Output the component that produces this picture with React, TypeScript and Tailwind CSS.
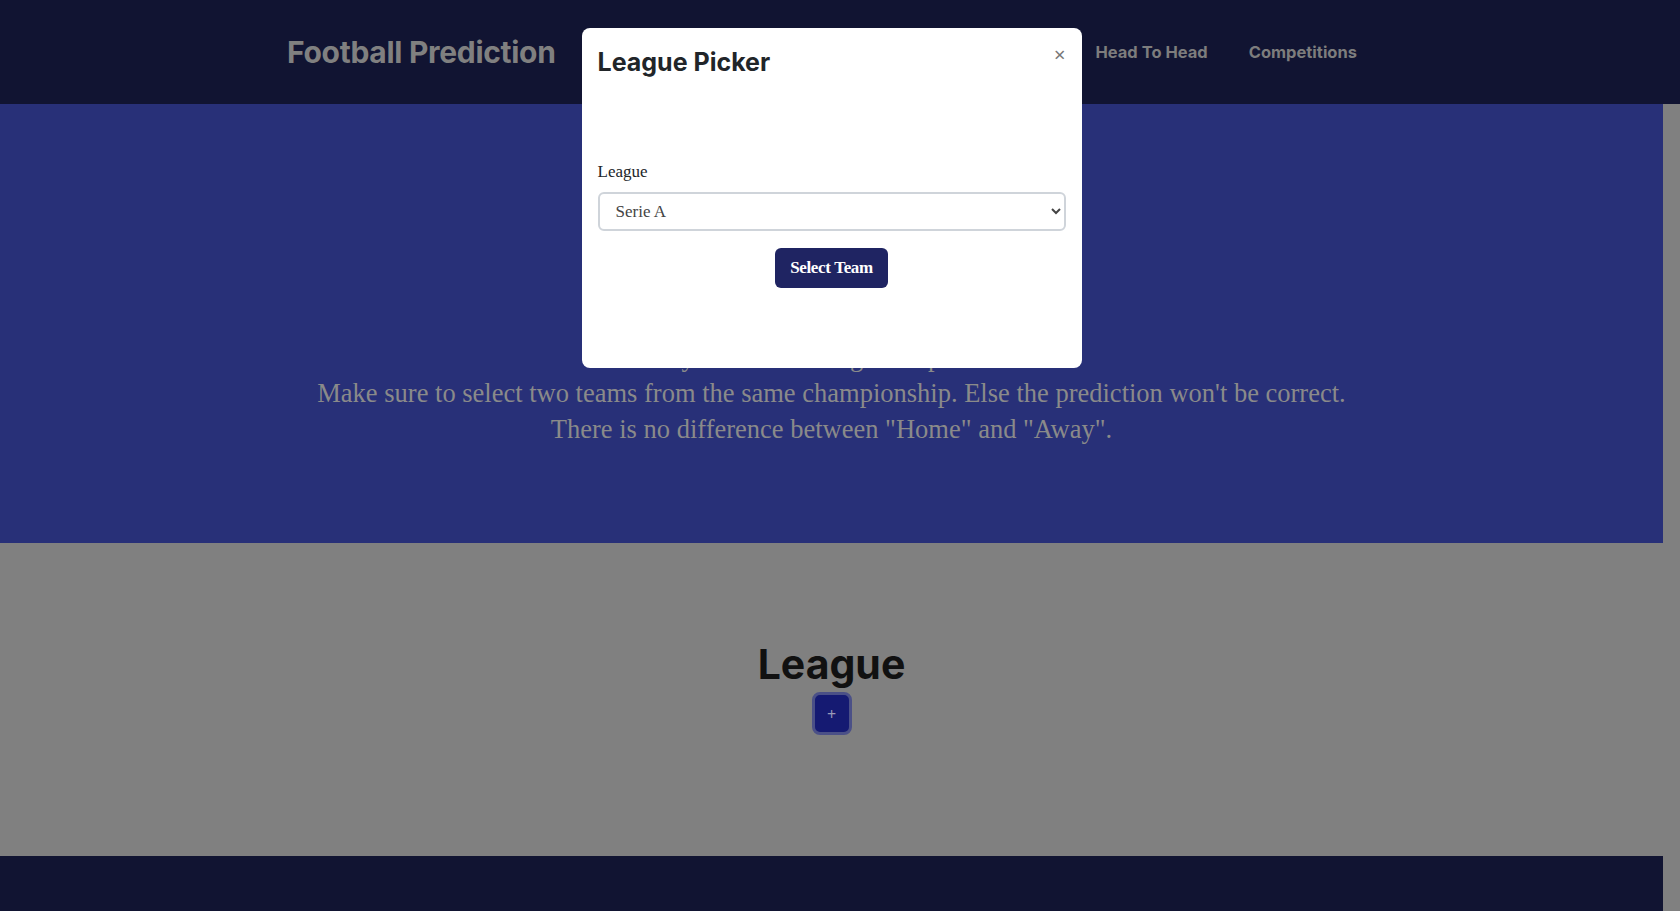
import { useState } from "react";

const display = "font-['Inter','Noto_Sans',sans-serif]";
const serif = "font-['Liberation_Serif','DejaVu_Serif',serif]";

function Header() {
    return <header className="h-[104px] w-full bg-[#111432]">
        <div className="flex h-full items-center justify-between pl-[287px] pr-[323px]">
            <span className={`${display} text-[30px] font-bold tracking-[-0.01em] text-[#808080]`}>Football Prediction</span>
            <nav className={`${display} flex items-center gap-[41px] text-[16.5px] font-bold text-[#7d7d7d]`}>
                <a>Head To Head</a>
                <a>Competitions</a>
            </nav>
        </div>
    </header>;
}

function LeagueModal() {
    const [league, setLeague] = useState("Serie A");
    return <div className="fixed inset-0 flex justify-center pr-[17px] pt-[28px]">
        <div className="relative h-[340px] w-[500px] rounded-[8px] bg-white">
            <div className="flex items-start justify-between p-4">
                <h2 className={`${display} text-[25px] font-bold leading-9 text-[#212529]`}>League Picker</h2>
                <button className="mt-[1px] text-[20px] leading-none text-[#777]">×</button>
            </div>
            <div className={`${serif} px-4 pt-[64px]`}>
                <label className="mb-2 block text-[17px] leading-6 text-[#212529]">League</label>
                <select value={league} onChange={(e) => setLeague(e.target.value)}
                    className="h-[39px] w-full rounded-[6px] border-2 border-[#cfd4da] bg-white pl-[12px] text-[17px] text-[#444]">
                    <option>Serie A</option>
                    <option>Premier League</option>
                    <option>La Liga</option>
                    <option>Bundesliga</option>
                    <option>Ligue 1</option>
                </select>
                <div className="mt-[17px] flex justify-center">
                    <button className="h-[40px] w-[113px] rounded-[6px] bg-[#1f2462] text-[17px] font-bold tracking-[-0.02em] text-white">Select Team</button>
                </div>
            </div>
        </div>
    </div>;
}

export default function App() {
    return <div className="relative min-h-[911px] bg-[#808080]">
        <Header />
        <div className="pr-[17px]">
            {/* title sits under the modal, only the tagline's descenders peek out */}
            <section className={`${serif} flex h-[439px] flex-col items-center bg-[#283078] pt-[235px] text-center text-[26.5px] leading-9 text-[#8a8a8a]`}>
                <p>Pick your teams and get the prediction</p>
                <p>Make sure to select two teams from the same championship. Else the prediction won't be correct.</p>
                <p>There is no difference between "Home" and "Away".</p>
            </section>
            <section className="flex h-[313px] flex-col items-center bg-[#808080] pt-[97px]">
                <h2 className={`${display} text-[41px] font-bold leading-[48px] text-[#111]`}>League</h2>
                <button className="mt-[4px] flex h-[43px] w-[40px] items-center justify-center rounded-[8px] border-[3px] border-[#4b5087] bg-[#151a72] text-[16px] text-[#9a9ab8]">+</button>
            </section>
            <footer className="h-[55px] bg-[#111432]" />
        </div>
        <LeagueModal />
    </div>;
}
